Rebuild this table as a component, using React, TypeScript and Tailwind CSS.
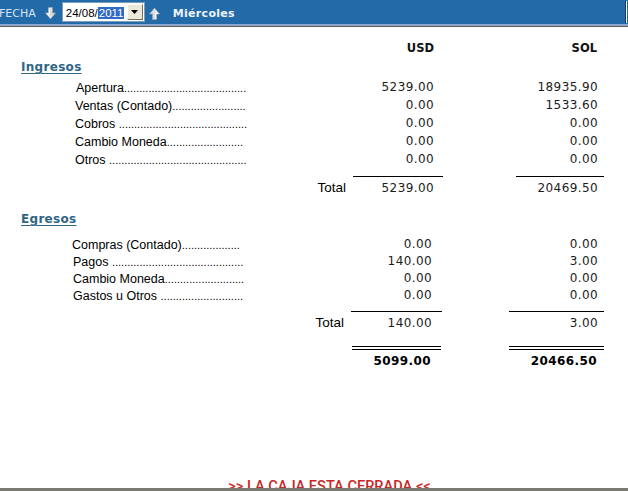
import React from 'react'

type Line = { label: string; box: string; dots: number; usd: string; sol: string; h: string }

const ingresos: Line[] = [
  { label: 'Apertura', box: 'ml-[76px]', dots: 40, usd: '5239.00', sol: '18935.90', h: 'h-[18px]' },
  { label: 'Ventas (Contado)', box: 'ml-[75px]', dots: 24, usd: '0.00', sol: '1533.60', h: 'h-[18px]' },
  { label: 'Cobros ', box: 'ml-[75px]', dots: 42, usd: '0.00', sol: '0.00', h: 'h-[18px]' },
  { label: 'Cambio Moneda', box: 'ml-[75px]', dots: 25, usd: '0.00', sol: '0.00', h: 'h-[18px]' },
  { label: 'Otros ', box: 'ml-[75px]', dots: 45, usd: '0.00', sol: '0.00', h: 'h-[18px]' },
]

const egresos: Line[] = [
  { label: 'Compras (Contado)', box: 'ml-[72px]', dots: 19, usd: '0.00', sol: '0.00', h: 'h-[17px]' },
  { label: 'Pagos ', box: 'ml-[73px]', dots: 43, usd: '140.00', sol: '3.00', h: 'h-[17px]' },
  { label: 'Cambio Moneda', box: 'ml-[73px]', dots: 26, usd: '0.00', sol: '0.00', h: 'h-[17px]' },
  { label: 'Gastos u Otros ', box: 'ml-[73px]', dots: 27, usd: '0.00', sol: '0.00', h: 'h-[17px]' },
]

const labelFont = "font-['Liberation_Sans',Arial,sans-serif]"
const numFont = "font-['DejaVu_Sans',Verdana,sans-serif] text-[12px] tracking-[0.4px] text-[#1c1c1c]"

function Arrow({ up }: { up?: boolean }) {
  return (
    <svg width="11" height="13" viewBox="0 0 11 13" className={up ? 'rotate-180' : ''}>
      <path d="M3.5 0.5 H7.5 V6 H10.5 L5.5 12 L0.5 6 H3.5 Z" fill="#d9dde3" stroke="#9aa6b4" strokeWidth="0.8" />
      <path d="M4.3 1.2 V6.6 H2.2 L5.5 10.5" fill="none" stroke="#ffffff" strokeWidth="1" />
    </svg>
  )
}

function Header() {
  return (
    <div className="shrink-0">
      <div className="h-[24px] bg-[#236aa9] flex items-center">
        <span className="pt-[4px] font-['DejaVu_Sans',Verdana,sans-serif] text-[11px] text-[#d6e4f3] -ml-[1px]">FECHA</span>
        <span className="ml-[9px] mt-[2px]"><Arrow /></span>
        <div className="ml-[6px] h-[20px] w-[83px] bg-white border border-[#7f9db9] flex items-center">
          <span className="pl-[3px] pt-[3px] font-['Liberation_Sans',Arial,sans-serif] text-[11.5px] text-black leading-none">
            24/08/<span className="bg-[#3169c6] text-white px-[1px]">2011</span>
          </span>
          <div className="ml-auto mr-[1px] h-[16px] w-[16px] bg-[#ece9d8] border border-t-white border-l-white border-r-[#716f64] border-b-[#716f64] flex items-center justify-center">
            <svg width="7" height="4" viewBox="0 0 7 4"><path d="M0 0 H7 L3.5 4 Z" fill="#000" /></svg>
          </div>
        </div>
        <span className="ml-[4px] mt-[2px]"><Arrow up /></span>
        <span className="ml-[13px] pt-[4px] font-['DejaVu_Sans',Verdana,sans-serif] font-bold text-[11px] tracking-[0.3px] text-[#eef4fb]">Miércoles</span>
        <div className="ml-auto mr-[1px] h-[22px] w-[2px] bg-white border-l border-[#1a3d63]" />
      </div>
      <div className="h-[2px] bg-[#8ea8cc]" />
      <div className="h-[1px] bg-[#5d5d5d]" />
    </div>
  )
}

function ItemRow({ l, usdPr }: { l: Line; usdPr: string }) {
  return (
    <div className={`flex items-center ${l.h}`}>
      <div className="w-[353px] shrink-0 pt-[3px]">
        <div className={`${l.box} whitespace-nowrap ${labelFont} text-[12.5px] text-black`}>
          {l.label}
          <span className="text-[11px]">{'.'.repeat(l.dots)}</span>
        </div>
      </div>
      <div className={`w-[90px] text-right ${usdPr} ${numFont}`}>{l.usd}</div>
      <div className="w-[73px]" />
      <div className={`w-[88px] text-right pr-[6px] ${numFont}`}>{l.sol}</div>
    </div>
  )
}

function Heading({ children, className }: { children: React.ReactNode; className: string }) {
  return (
    <div className={`h-[18px] flex items-center pl-[21px] ${className}`}>
      <span className="font-['DejaVu_Sans',Verdana,sans-serif] font-bold text-[12px] tracking-[0.3px] text-[#2f6585] underline underline-offset-[2px]">
        {children}
      </span>
    </div>
  )
}

export default function App() {
  return (
    <div className="w-[628px] h-[491px] bg-white flex flex-col overflow-hidden">
      <Header />
      <div className="flex-1 overflow-hidden">
        {/* column headers */}
        <div className="flex items-center h-[18px] mt-[13px]">
          <div className="w-[353px]" />
          <div className="w-[90px] text-right pr-[9px] font-['DejaVu_Sans',Verdana,sans-serif] font-bold text-[11.5px] text-[#111]">USD</div>
          <div className="w-[73px]" />
          <div className="w-[88px] text-right pr-[7px] font-['DejaVu_Sans',Verdana,sans-serif] font-bold text-[11.5px] text-[#111]">SOL</div>
        </div>

        <Heading className="">Ingresos</Heading>
        <div className="mt-[2px]">
          {ingresos.map((l) => (
            <ItemRow key={l.label} l={l} usdPr="pr-[9px]" />
          ))}
        </div>
        <div className="flex mt-[8px]">
          <div className="ml-[353px] w-[90px] h-px bg-black" />
          <div className="ml-[73px] w-[88px] h-px bg-black" />
        </div>
        <div className="flex items-center h-[18px] mt-[2px]">
          <div className={`w-[353px] text-right pr-[7px] ${labelFont} text-[13.5px] text-black`}>Total</div>
          <div className={`w-[90px] text-right pr-[9px] ${numFont}`}>5239.00</div>
          <div className="w-[73px]" />
          <div className={`w-[88px] text-right pr-[6px] ${numFont}`}>20469.50</div>
        </div>

        <Heading className="mt-[13px]">Egresos</Heading>
        <div className="mt-[7px]">
          {egresos.map((l) => (
            <ItemRow key={l.label} l={l} usdPr="pr-[11px]" />
          ))}
        </div>
        <div className="flex mt-[8px]">
          <div className="ml-[351px] w-[91px] h-px bg-black" />
          <div className="ml-[67px] w-[95px] h-px bg-black" />
        </div>
        <div className="flex items-center h-[18px] mt-[2px]">
          <div className={`w-[353px] text-right pr-[9px] ${labelFont} text-[13.5px] text-black`}>Total</div>
          <div className={`w-[90px] text-right pr-[11px] ${numFont}`}>140.00</div>
          <div className="w-[73px]" />
          <div className={`w-[88px] text-right pr-[6px] ${numFont}`}>3.00</div>
        </div>

        <div className="flex mt-[14px]">
          <div className="ml-[352px] w-[89px] h-[4px] border-y border-black" />
          <div className="ml-[68px] w-[95px] h-[4px] border-y border-black" />
        </div>
        <div className="flex items-center h-[18px] mt-[2px]">
          <div className="w-[353px]" />
          <div className={`w-[90px] text-right pr-[12px] ${numFont} font-bold text-black`}>5099.00</div>
          <div className="w-[73px]" />
          <div className={`w-[88px] text-right pr-[7px] ${numFont} font-bold text-black`}>20466.50</div>
        </div>

        <div className="mt-[107px] pl-[31px] text-center font-['Roboto',sans-serif] font-medium text-[14.6px] leading-[18px] text-[#c62828]">
          &gt;&gt; LA CAJA ESTA CERRADA &lt;&lt;
        </div>
      </div>
      <div className="h-[3px] shrink-0 bg-[#7a7a72]" />
    </div>
  )
}
